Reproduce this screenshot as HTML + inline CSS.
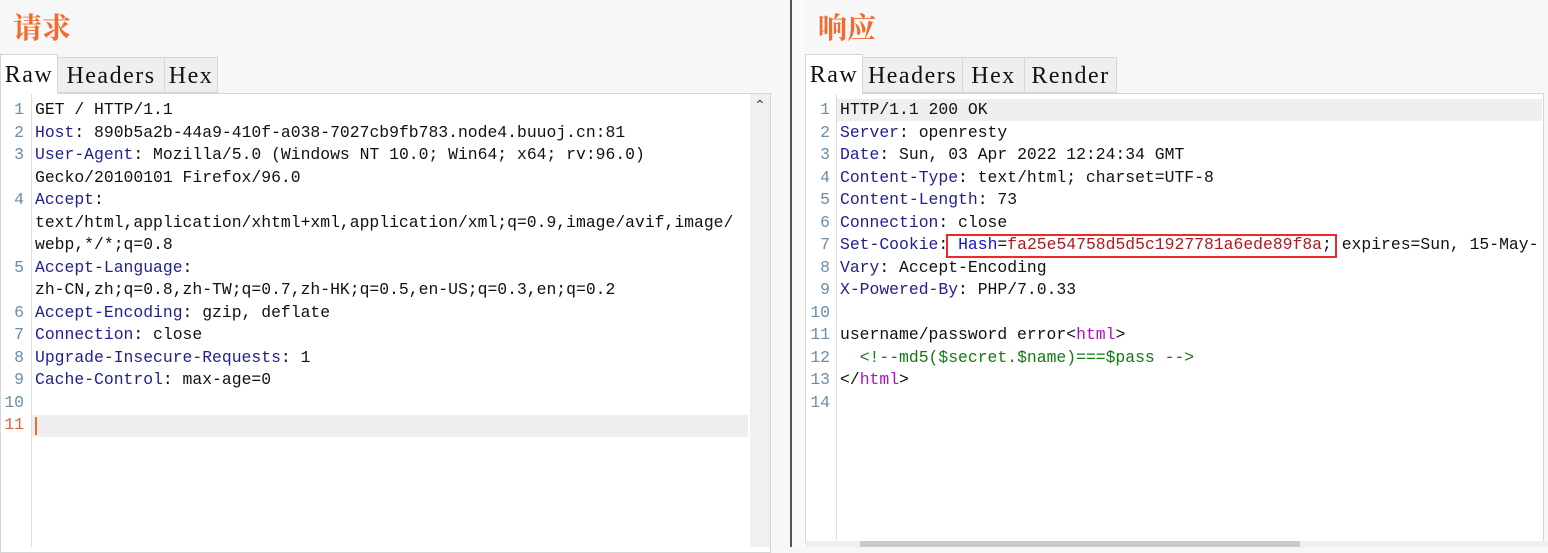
<!DOCTYPE html>
<html><head><meta charset="utf-8"><style>
body{margin:0;width:1548px;height:547px;background:#f7f7f7;position:relative;overflow:hidden;font-family:"Liberation Mono",monospace}
.title{position:absolute;top:6px;font:bold 29px "Noto Serif CJK SC","Noto Sans CJK SC",serif;color:#f26a2c}
.tab{position:absolute;top:57px;height:36px;background:#efefef;border:1px solid #d6d6d6;box-sizing:border-box;font:24px "Liberation Serif",serif;letter-spacing:1.5px;line-height:36px;text-align:center;color:#111}
.tab.a{top:54px;height:40px;background:#fff;border-bottom:none;line-height:40px;z-index:2}
.panel{position:absolute;top:93px;background:#fff;border:1px solid #d6d6d6;box-sizing:border-box}
.code{position:absolute;font-size:16.4px;line-height:22.5px;white-space:pre;color:#111}
.ln{position:absolute;font-size:16.4px;line-height:22.5px;white-space:pre;color:#6a8da8;text-align:right}
.k{color:#1f1f8f}.b{color:#1010e0}.r{color:#b0181e}.g{color:#117a11}.m{color:#b010c0}
</style></head><body>
<div class="title" style="left:13px">请求</div>
<div class="title" style="left:818px">响应</div>

<div class="tab a" style="left:0;width:58px">Raw</div>
<div class="tab" style="left:57px;width:108px">Headers</div>
<div class="tab" style="left:164px;width:54px">Hex</div>

<div class="panel" style="left:0;width:771px;height:460px"></div>
<div style="position:absolute;left:31px;top:94px;width:1px;height:453px;background:#ddd"></div>
<div style="position:absolute;left:750px;top:94px;width:20px;height:453px;background:#f0f0f0"></div>
<div style="position:absolute;left:754px;top:98px;font-size:14px;color:#444">&#8963;</div>
<div style="position:absolute;left:32px;top:415px;width:716px;height:22px;background:#efefef"></div>
<div style="position:absolute;left:35px;top:417px;width:2px;height:18px;background:#f26a2c"></div>
<div class="ln" style="left:2px;top:99px;width:22px">1
2
3

4


5

6
7
8
9
10
<span style="color:#e0603a">11</span></div>
<div class="code" style="left:35px;top:99px">GET / HTTP/1.1
<span class="k">Host</span>: 890b5a2b-44a9-410f-a038-7027cb9fb783.node4.buuoj.cn:81
<span class="k">User-Agent</span>: Mozilla/5.0 (Windows NT 10.0; Win64; x64; rv:96.0)
Gecko/20100101 Firefox/96.0
<span class="k">Accept</span>:
text/html,application/xhtml+xml,application/xml;q=0.9,image/avif,image/
webp,*/*;q=0.8
<span class="k">Accept-Language</span>:
zh-CN,zh;q=0.8,zh-TW;q=0.7,zh-HK;q=0.5,en-US;q=0.3,en;q=0.2
<span class="k">Accept-Encoding</span>: gzip, deflate
<span class="k">Connection</span>: close
<span class="k">Upgrade-Insecure-Requests</span>: 1
<span class="k">Cache-Control</span>: max-age=0</div>

<div style="position:absolute;left:790px;top:0;width:2px;height:547px;background:#555"></div>
<div style="position:absolute;left:792px;top:0;width:13px;height:547px;background:#fafafa"></div>

<div class="tab a" style="left:805px;width:58px">Raw</div>
<div class="tab" style="left:862px;width:101px">Headers</div>
<div class="tab" style="left:962px;width:63px">Hex</div>
<div class="tab" style="left:1024px;width:93px">Render</div>

<div class="panel" style="left:805px;width:739px;height:450px"></div>
<div style="position:absolute;left:836px;top:94px;width:1px;height:446px;background:#ddd"></div>
<div style="position:absolute;left:837px;top:99px;width:705px;height:22px;background:#efefef"></div>
<div style="position:absolute;left:806px;top:541px;width:742px;height:6px;background:#efefef"></div>
<div style="position:absolute;left:860px;top:541px;width:440px;height:6px;background:#c9c9c9"></div>
<div class="ln" style="left:806px;top:99px;width:24px">1
2
3
4
5
6
7
8
9
10
11
12
13
14</div>
<div class="code" style="left:840px;top:99px;width:702px;overflow:hidden">HTTP/1.1 200 OK
<span class="k">Server</span>: openresty
<span class="k">Date</span>: Sun, 03 Apr 2022 12:24:34 GMT
<span class="k">Content-Type</span>: text/html; charset=UTF-8
<span class="k">Content-Length</span>: 73
<span class="k">Connection</span>: close
<span class="k">Set-Cookie</span>: <span class="b">Hash</span>=<span class="r">fa25e54758d5d5c1927781a6ede89f8a</span>; expires=Sun, 15-May-
<span class="k">Vary</span>: Accept-Encoding
<span class="k">X-Powered-By</span>: PHP/7.0.33

username/password error&lt;<span class="m">html</span>&gt;
  <span class="g">&lt;!--md5($secret.$name)===$pass --&gt;</span>
&lt;/<span class="m">html</span>&gt;
</div>
<div style="position:absolute;left:946px;top:234px;width:391px;height:24px;border:2px solid #ec2a2a;box-sizing:border-box"></div>
</body></html>
